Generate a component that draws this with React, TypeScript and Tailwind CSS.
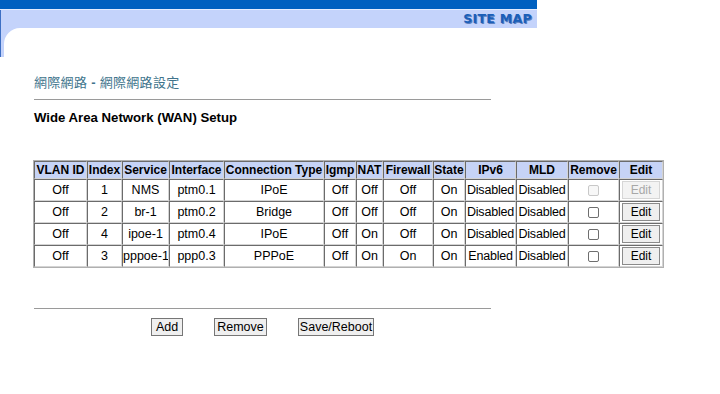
const rows = [
  { vlan: 'Off', idx: '1', svc: 'NMS', ifc: 'ptm0.1', type: 'IPoE', igmp: 'Off', nat: 'Off', fw: 'Off', state: 'On', ipv6: 'Disabled', mld: 'Disabled', disabled: true },
  { vlan: 'Off', idx: '2', svc: 'br-1', ifc: 'ptm0.2', type: 'Bridge', igmp: 'Off', nat: 'Off', fw: 'Off', state: 'On', ipv6: 'Disabled', mld: 'Disabled', disabled: false },
  { vlan: 'Off', idx: '4', svc: 'ipoe-1', ifc: 'ptm0.4', type: 'IPoE', igmp: 'Off', nat: 'On', fw: 'Off', state: 'On', ipv6: 'Disabled', mld: 'Disabled', disabled: false },
  { vlan: 'Off', idx: '3', svc: 'pppoe-1', ifc: 'ppp0.3', type: 'PPPoE', igmp: 'Off', nat: 'On', fw: 'On', state: 'On', ipv6: 'Enabled', mld: 'Disabled', disabled: false },
];

const headers = [
  ['VLAN ID', 'w-[53px]'],
  ['Index', 'w-[35px]'],
  ['Service', 'w-[47px]'],
  ['Interface', 'w-[55px]'],
  ['Connection Type', 'w-[100px]'],
  ['Igmp', 'w-[32px]'],
  ['NAT', 'w-[27px]'],
  ['Firewall', 'w-[50px]'],
  ['State', 'w-[32px]'],
  ['IPv6', 'w-[51px]'],
  ['MLD', 'w-[52px]'],
  ['Remove', 'w-[51px]'],
  ['Edit', 'w-[44px]'],
];

const cell = 'border-t border-l border-t-[#6b6b6b] border-l-[#6b6b6b] border-b border-r border-b-[#d4d4d4] border-r-[#d4d4d4] text-center p-0 whitespace-nowrap overflow-hidden';

export default function App() {
  return (
    <div className="w-[720px] h-[394px] bg-white overflow-hidden text-black" style={{ fontFamily: '"Liberation Sans", Arial, sans-serif' }}>
      {/* banner */}
      <div className="w-[537px]">
        <div className="h-[9px] bg-[#0060c0]" />
        <div className="h-px bg-[#e4ecff]" />
        <div className="border-l border-[#3d6fc4] bg-[#c4d3fb]">
          <div className="h-[18px] flex items-center justify-end pr-[5px]">
            <span
              className="text-[12.5px] font-black tracking-[0.3px] text-[#1b5fb8]"
              style={{ fontFamily: '"DejaVu Sans", sans-serif', textShadow: '1px 1px 0 #5a7fc0' }}
            >
              SITE MAP
            </span>
          </div>
          <div className="h-[29px] pl-[3px] flex">
            <div className="flex-1 bg-white rounded-tl-[16px]" />
          </div>
        </div>
      </div>

      <div className="ml-[34px] mt-[16px]">
        <div className="text-[13px] leading-[19px] text-[#40748c] tracking-[0.3px]" style={{ fontFamily: '"Liberation Sans", "Noto Sans CJK TC", sans-serif' }}>
          網際網路 <span className="font-bold">-</span> 網際網路設定
        </div>
        <div className="w-[457px] h-px bg-[#9a9a9a] mt-[7px]" />
        <div className="mt-[9px] text-[13.2px] font-bold leading-[18px]">Wide Area Network (WAN) Setup</div>

        <table className="mt-[33px] -ml-px border-separate border-spacing-0 border border-[#b0b0b0] text-[12.5px] leading-[16px] table-fixed w-[631px]">
          <thead>
            <tr className="h-[18px] bg-[#c6d3f6]">
              {headers.map(([h, w]) => (
                <th key={h} className={`${cell} ${w} font-bold text-[12px]`}>{h}</th>
              ))}
            </tr>
          </thead>
          <tbody>
            {rows.map((r) => (
              <tr key={r.idx} className="h-[22px]">
                <td className={cell}>{r.vlan}</td>
                <td className={cell}>{r.idx}</td>
                <td className={cell}>{r.svc}</td>
                <td className={cell}>{r.ifc}</td>
                <td className={cell}>{r.type}</td>
                <td className={cell}>{r.igmp}</td>
                <td className={cell}>{r.nat}</td>
                <td className={cell}>{r.fw}</td>
                <td className={cell}>{r.state}</td>
                <td className={`${cell} tracking-[-0.2px]`}>{r.ipv6}</td>
                <td className={`${cell} tracking-[-0.2px]`}>{r.mld}</td>
                <td className={cell}>
                  <div className="flex justify-center">
                    <span
                      className={`block w-[11px] h-[11px] rounded-[2px] border ${r.disabled ? 'border-[#c8c8c8] bg-[#f7f7f7]' : 'border-[#6e6e6e] bg-white'}`}
                    />
                  </div>
                </td>
                <td className={cell}>
                  <div className="flex justify-center">
                    <span
                      className={`w-[38px] h-[18px] flex items-center justify-center text-[12px] border ${
                        r.disabled ? 'border-[#d6d6d6] bg-[#f3f3f3] text-[#a8a8a8]' : 'border-[#8a8a8a] bg-[#efefef] text-black'
                      }`}
                    >
                      Edit
                    </span>
                  </div>
                </td>
              </tr>
            ))}
          </tbody>
        </table>

        <div className="w-[457px] h-px bg-[#9a9a9a] mt-[40px]" />
        <div className="flex mt-[9px] text-[12.5px]">
          <button className="ml-[117px] w-[32px] h-[18px] border border-[#767676] bg-[#efefef] leading-none">Add</button>
          <button className="ml-[31px] w-[53px] h-[18px] border border-[#767676] bg-[#efefef] leading-none">Remove</button>
          <button className="ml-[31px] w-[76px] h-[18px] border border-[#767676] bg-[#efefef] leading-none whitespace-nowrap">Save/Reboot</button>
        </div>
      </div>
    </div>
  );
}
